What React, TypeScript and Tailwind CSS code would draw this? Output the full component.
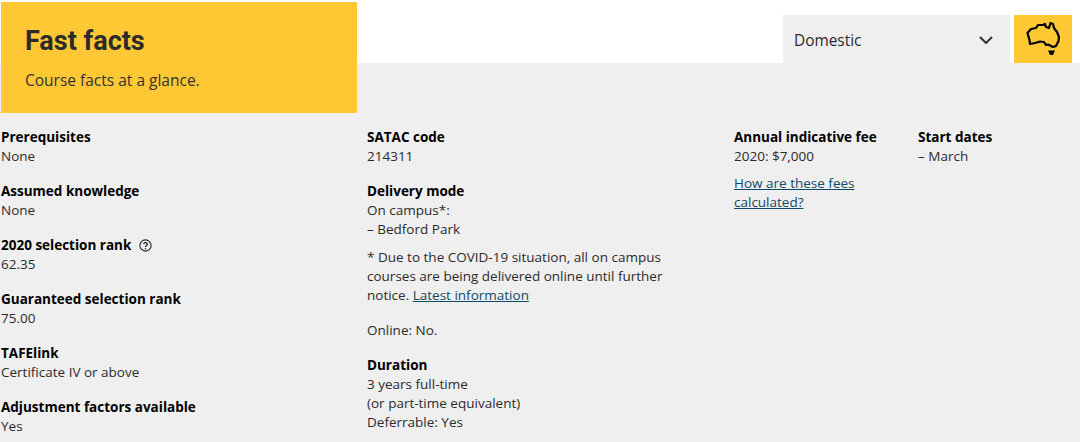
const font = "font-['Open_Sans',sans-serif]";

function Fact({ label, children, extra }: { label: string; children: React.ReactNode; extra?: React.ReactNode }) {
	return (
		<div className="mb-4">
			<div className="flex items-center font-bold text-black">
				{label}
				{extra}
			</div>
			<div>{children}</div>
		</div>
	);
}

function HelpIcon() {
	return (
		<svg viewBox="0 0 12 12" className="ml-2 h-[13px] w-[13px]" fill="none" stroke="#222" strokeWidth="1">
			<circle cx="6" cy="6" r="5.2" />
			<path d="M4.4 4.8a1.6 1.6 0 1 1 2.4 1.4c-.5.3-.8.5-.8 1.1" strokeWidth="1.2" />
			<circle cx="6" cy="8.9" r=".7" fill="#222" stroke="none" />
		</svg>
	);
}

function AusIcon() {
	return (
		<svg viewBox="0 0 34 40" className="h-[40px] w-[34px]" fill="none" stroke="#000" strokeWidth="2.2" strokeLinejoin="round">
			<path d="M1.5 14 L5 10 L10 9 L12 6 L17 6 L19 5 L20 8 L23 9 L24.5 4 L27 5 L28 9 L31 13 L33 18 L32.5 22 L30 27 L27 28 L22 25.5 L20 26 L18 23 L14 22.5 L9 24 L4 25 L3.5 21 Z" />
			<path d="M22 31.5 L29 31.5 L27 36 L24 36 Z" fill="#000" stroke="none" />
		</svg>
	);
}

export default function App() {
	return (
		<div className={`${font} h-[442px] w-[1080px] overflow-hidden bg-[#efefef] text-[13.5px] leading-[19px] text-[#2b2b2b]`}>
			<div className="flex h-[63px] items-start justify-between bg-white pl-px pr-2">
				<div className="relative z-10 mt-[2px] h-[111px] w-[356px] bg-[#fec834] pl-6 pt-[21px]">
					<h2 className="font-['Roboto',sans-serif] text-[27px] font-bold leading-[36px] text-[#2b2b2b]">Fast facts</h2>
					<p className="mt-[10px] text-[15.5px] leading-[22px] text-[#333]">Course facts at a glance.</p>
				</div>
				<div className="mt-[15px] flex">
					<div className="flex h-[48px] w-[227px] items-center justify-between bg-[#efefef] pl-[11px] pr-[17px] pt-[2px] text-[15.4px]">
						Domestic
						<svg viewBox="0 0 14 8" className="h-2 w-[14px]" fill="none" stroke="#333" strokeWidth="2">
							<path d="M1 1l6 6 6-6" />
						</svg>
					</div>
					<div className="ml-1 flex h-[48px] w-[58px] items-center justify-center bg-[#fec834]">
						<AusIcon />
					</div>
				</div>
			</div>
			<div className="flex pl-px pt-[65px]">
				<div className="w-[366px]">
					<Fact label="Prerequisites">None</Fact>
					<Fact label="Assumed knowledge">None</Fact>
					<Fact label="2020 selection rank" extra={<HelpIcon />}>62.35</Fact>
					<Fact label="Guaranteed selection rank">75.00</Fact>
					<Fact label="TAFElink">Certificate IV or above</Fact>
					<Fact label="Adjustment factors available">Yes</Fact>
				</div>
				<div className="w-[367px]">
					<Fact label="SATAC code">214311</Fact>
					<Fact label="Delivery mode">
						On campus*:
						<br />– Bedford Park
						<p className="mt-[9px] w-[310px]">
							* Due to the COVID-19 situation, all on campus courses are being delivered online until further notice.{" "}
							<a className="text-[#0f4a66] underline">Latest information</a>
						</p>
						<p className="mt-4">Online: No.</p>
					</Fact>
					<Fact label="Duration">
						3 years full-time
						<br />
						(or part-time equivalent)
						<br />
						Deferrable: Yes
					</Fact>
				</div>
				<div className="w-[184px]">
					<Fact label="Annual indicative fee">
						2020: $7,000
						<p className="mt-2 w-[150px] text-[#0f4a66] underline">How are these fees calculated?</p>
					</Fact>
				</div>
				<div>
					<Fact label="Start dates">– March</Fact>
				</div>
			</div>
		</div>
	);
}
